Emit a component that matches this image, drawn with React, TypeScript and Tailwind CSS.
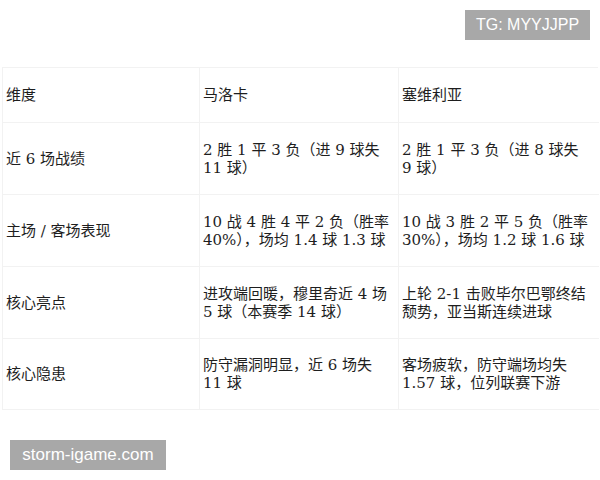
import React from "react";

const rows: { h: string; label: string[]; a: string[]; b: string[] }[] = [
  { h: "h-[55px]", label: ["维度"], a: ["马洛卡"], b: ["塞维利亚"] },
  {
    h: "h-[72px]",
    label: ["近 6 场战绩"],
    a: ["2 胜 1 平 3 负（进 9 球失", "11 球）"],
    b: ["2 胜 1 平 3 负（进 8 球失", "9 球）"],
  },
  {
    h: "h-[72px]",
    label: ["主场 / 客场表现"],
    a: ["10 战 4 胜 4 平 2 负（胜率", "40%），场均 1.4 球 1.3 球"],
    b: ["10 战 3 胜 2 平 5 负（胜率", "30%），场均 1.2 球 1.6 球"],
  },
  {
    h: "h-[72px]",
    label: ["核心亮点"],
    a: ["进攻端回暖，穆里奇近 4 场", "5 球（本赛季 14 球）"],
    b: ["上轮 2-1 击败毕尔巴鄂终结", "颓势，亚当斯连续进球"],
  },
  {
    h: "h-[71px]",
    label: ["核心隐患"],
    a: ["防守漏洞明显，近 6 场失", "11 球"],
    b: ["客场疲软，防守端场均失", "1.57 球，位列联赛下游"],
  },
];

function Cell({ lines, h, last }: { lines: string[]; h: string; last?: boolean }) {
  return (
    <div
      className={`${h} flex flex-col justify-center pl-[3px] border-b border-[#f2f2f2] ${
        last ? "" : "border-r"
      } whitespace-nowrap overflow-hidden`}
    >
      {lines.map((l, i) => (
        <div key={i} className="leading-[18px]">
          {l}
        </div>
      ))}
    </div>
  );
}

export default function App() {
  return (
    <div className="w-[600px] h-[480px] bg-white relative overflow-hidden">
      <div className="flex justify-end pt-[10px] pr-[10px]">
        <div
          className="w-[125px] h-[30px] bg-[#a8a8a8] text-white text-[16px] flex items-center justify-center"
          style={{ fontFamily: '"Liberation Sans", Arial, sans-serif' }}
        >
          TG: MYYJJPP
        </div>
      </div>
      <div
        className="ml-[2px] mt-[27px] w-[596px] grid grid-cols-[197px_199px_200px] border-t border-l border-[#f2f2f2] text-[15px] text-[#1e1e1e]"
        style={{ fontFamily: '"DejaVu Serif", "Noto Sans CJK SC", serif' }}
      >
        {rows.map((r, i) => (
          <React.Fragment key={i}>
            <Cell lines={r.label} h={r.h} />
            <Cell lines={r.a} h={r.h} />
            <Cell lines={r.b} h={r.h} last />
          </React.Fragment>
        ))}
      </div>
      <div className="pl-[10px] mt-[30px]">
        <div
          className="w-[156px] h-[30px] bg-[#a8a8a8] text-white text-[17px] flex items-center justify-center"
          style={{ fontFamily: '"Liberation Sans", Arial, sans-serif' }}
        >
          storm-igame.com
        </div>
      </div>
    </div>
  );
}
